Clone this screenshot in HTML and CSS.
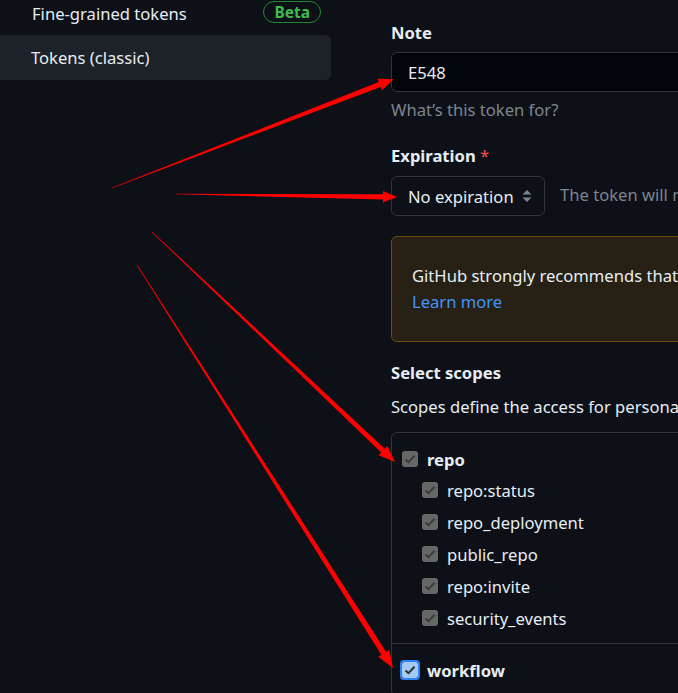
FILE: index.html
```html
<!DOCTYPE html>
<html>
<head>
<meta charset="utf-8">
<link rel="stylesheet" href="styles.css">
</head>
<body>
<div class="page">
  <nav class="sidebar">
    <div class="nav-item first">
      <span>Fine-grained tokens</span>
      <span class="badge">Beta</span>
    </div>
    <div class="nav-item selected">
      <span>Tokens (classic)</span>
    </div>
  </nav>
  <main class="main">
    <div class="label">Note</div>
    <div class="input">E548</div>
    <div class="hint">What’s this token for?</div>

    <div class="label label-exp">Expiration <span class="req">*</span></div>
    <div class="exp-row">
      <div class="select">
        <span>No expiration</span>
        <svg class="updown" width="10" height="14" viewBox="0 0 10 14"><path d="M5 1 L9.5 5.5 H0.5 Z M5 13 L9.5 8.5 H0.5 Z" fill="#7d8590"/></svg>
      </div>
      <span class="exp-note">The token will never expire!</span>
    </div>

    <div class="warn">
      <div>GitHub strongly recommends that you set an expiration date for your token to help keep your information secure.</div>
      <a class="link">Learn more</a>
    </div>

    <div class="label label-scopes">Select scopes</div>
    <div class="desc">Scopes define the access for personal tokens. Read more about OAuth scopes.</div>

    <div class="scopes">
      <div class="group">
        <div class="row top">
          <span class="cb gray"><svg width="16" height="16" viewBox="0 0 16 16"><path d="M3.5 8.5 L6.5 11.2 L12.5 4.8" fill="none" stroke="#3a3a3a" stroke-width="2"/></svg></span>
          <span class="name">repo</span>
        </div>
        <div class="row sub">
          <span class="cb gray"><svg width="16" height="16" viewBox="0 0 16 16"><path d="M3.5 8.5 L6.5 11.2 L12.5 4.8" fill="none" stroke="#3a3a3a" stroke-width="2"/></svg></span>
          <span>repo:status</span>
        </div>
        <div class="row sub">
          <span class="cb gray"><svg width="16" height="16" viewBox="0 0 16 16"><path d="M3.5 8.5 L6.5 11.2 L12.5 4.8" fill="none" stroke="#3a3a3a" stroke-width="2"/></svg></span>
          <span>repo_deployment</span>
        </div>
        <div class="row sub">
          <span class="cb gray"><svg width="16" height="16" viewBox="0 0 16 16"><path d="M3.5 8.5 L6.5 11.2 L12.5 4.8" fill="none" stroke="#3a3a3a" stroke-width="2"/></svg></span>
          <span>public_repo</span>
        </div>
        <div class="row sub">
          <span class="cb gray"><svg width="16" height="16" viewBox="0 0 16 16"><path d="M3.5 8.5 L6.5 11.2 L12.5 4.8" fill="none" stroke="#3a3a3a" stroke-width="2"/></svg></span>
          <span>repo:invite</span>
        </div>
        <div class="row sub">
          <span class="cb gray"><svg width="16" height="16" viewBox="0 0 16 16"><path d="M3.5 8.5 L6.5 11.2 L12.5 4.8" fill="none" stroke="#3a3a3a" stroke-width="2"/></svg></span>
          <span>security_events</span>
        </div>
      </div>
      <div class="group divided">
        <div class="row top">
          <span class="cb blue"><svg width="16" height="16" viewBox="0 0 16 16"><path d="M3.5 8.5 L6.5 11.2 L12.5 4.8" fill="none" stroke="#2b2f36" stroke-width="2"/></svg></span>
          <span class="name">workflow</span>
        </div>
      </div>
    </div>
  </main>
</div>
<svg class="arrows" width="678" height="693" viewBox="0 0 678 693">
  <g transform="translate(112 188) rotate(-21.13)">
    <polygon points="0,-0.3 287,-2.6 287,-6.2 302,0 287,6.2 287,2.6 0,0.3" fill="#ff0000"/>
  </g>
  <g transform="translate(176 194) rotate(0.78)">
    <polygon points="0,-0.3 207,-2.6 207,-5.8 221,0 207,5.8 207,2.6 0,0.3" fill="#ff0000"/>
  </g>
  <g transform="translate(152 232) rotate(43.42)">
    <polygon points="0,-0.3 318,-2.6 318,-6.4 334.6,0 318,6.4 318,2.6 0,0.3" fill="#ff0000"/>
  </g>
  <g transform="translate(137 265) rotate(57.57)">
    <polygon points="0,-0.3 460,-2.8 460,-6.6 477.4,0 460,6.6 460,2.8 0,0.3" fill="#ff0000"/>
  </g>
</svg>
</body>
</html>
```

FILE: styles.css
```css
html, body {
  margin: 0;
  padding: 0;
  background: #0d1117;
  overflow: hidden;
}
body {
  width: 678px;
  height: 693px;
  position: relative;
  font-family: "Noto Sans", "Open Sans", sans-serif;
  font-size: 16.6px;
  color: #e6edf3;
}
.page {
  display: grid;
  grid-template-columns: 331px 800px;
  column-gap: 60px;
}
.nav-item {
  height: 45px;
  display: flex;
  align-items: center;
  justify-content: space-between;
  padding: 0 10px 0 32px;
  border-radius: 0 6px 6px 0;
}
.nav-item.first {
  margin-top: -8px;
  height: 43px;
}
.nav-item.selected {
  background: #1d2228;
  padding-left: 31px;
}
.badge {
  border: 1px solid #238636;
  color: #3fb950;
  font-weight: 700;
  font-size: 15.5px;
  line-height: 20px;
  padding: 0 10px;
  border-radius: 12px;
  margin-top: -4px;
}
.main {
  padding-top: 21px;
}
.label {
  font-weight: 700;
  line-height: 24px;
}
.req {
  color: #f85149;
  font-weight: 400;
}
.input {
  margin-top: 7px;
  height: 40px;
  box-sizing: border-box;
  border: 1px solid #30363d;
  border-radius: 6px;
  background: #010409;
  padding-left: 16px;
  display: flex;
  align-items: center;
}
.hint {
  margin-top: 6px;
  line-height: 24px;
  color: #7d8590;
}
.label-exp {
  margin-top: 22px;
}
.exp-row {
  margin-top: 8px;
  display: flex;
  align-items: center;
  gap: 15px;
}
.select {
  width: 154px;
  height: 40px;
  box-sizing: border-box;
  border: 1px solid #30363d;
  border-radius: 6px;
  display: flex;
  align-items: center;
  justify-content: space-between;
  padding: 0 12px 0 16px;
}
.updown {
  display: block;
}
.exp-note {
  color: #7d8590;
  white-space: nowrap;
  margin-top: -3px;
}
.warn {
  margin-top: 20px;
  border: 1px solid #6c4d10;
  background: #272115;
  border-radius: 6px;
  padding: 26px 20px;
  line-height: 26px;
  white-space: nowrap;
}
.link {
  color: #4493f8;
}
.label-scopes {
  margin-top: 19px;
}
.desc {
  margin-top: 10px;
  line-height: 24px;
  white-space: nowrap;
}
.scopes {
  margin-top: 13px;
  border: 1px solid #30363d;
  border-radius: 6px;
}
.group {
  padding: 10px 10px 9px;
}
.group.divided {
  border-top: 1px solid #30363d;
  padding-top: 10px;
}
.row {
  height: 32px;
  display: flex;
  align-items: center;
  gap: 9px;
  white-space: nowrap;
}
.row.sub {
  padding-left: 20px;
}
.row.top + .row.sub {
  margin-top: -1px;
}
.name {
  font-weight: 700;
}
.cb {
  width: 16px;
  height: 16px;
  border-radius: 3px;
  flex: none;
  box-sizing: border-box;
  display: block;
}
.cb svg {
  display: block;
}
.cb.gray {
  background: #676767;
}
.cb.blue {
  background: #a6c8f4;
  outline: 2px solid #2f81f7;
  outline-offset: 0;
  border-radius: 2px;
}
.arrows {
  position: absolute;
  left: 0;
  top: 0;
  pointer-events: none;
}
```
